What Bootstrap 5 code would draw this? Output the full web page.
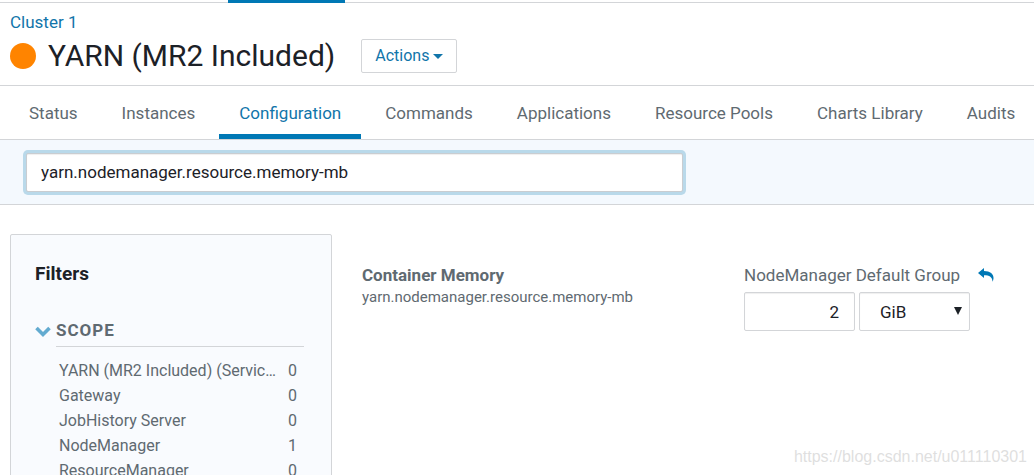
<!DOCTYPE html>
<html lang="en">
<head>
<meta charset="utf-8">
<meta name="viewport" content="width=device-width, initial-scale=1">
<title>YARN (MR2 Included) - Configuration</title>
<link href="https://cdn.jsdelivr.net/npm/bootstrap@5.3.0/dist/css/bootstrap.min.css" rel="stylesheet">
<style>
  :root { --brand: #0078b5; --line: #d3d5d8; --muted: #5f6a71; --ink: #1c2127; }
  body { font-family: Roboto, "Liberation Sans", sans-serif; font-size: 17px; line-height: 24px; color: var(--muted); background: #fff; }
  a { color: #1175aa; text-decoration: none; }
  .main-strip { height: 3px; border-bottom: 1px solid var(--line); padding-left: 228px; }
  .main-strip span { width: 117px; height: 3px; background: var(--brand); }
  .service-head { padding: 7px 10px 9px; border-bottom: 1px solid var(--line); }
  .service-head h1 { font-size: 30px; line-height: 40px; font-weight: 400; color: var(--ink); }
  .service-title { padding-top: 2px; }
  .health { width: 26px; height: 26px; }
  .btn-actions { --bs-btn-color: #1175aa; --bs-btn-border-color: var(--line); --bs-btn-border-radius: 2px; --bs-btn-font-size: 16px; --bs-btn-padding-x: 13px; --bs-btn-padding-y: 4px; --bs-btn-hover-color: #1175aa; --bs-btn-hover-border-color: var(--brand); margin-left: 26px; }
  .service-tabs { gap: 4px; padding: 0 9px; border-bottom: 1px solid var(--line); }
  .service-tabs .nav-link { padding: 15px 20px 9px; color: var(--muted); border-bottom: 5px solid transparent; }
  .service-tabs .nav-link.active { color: #1175aa; border-color: var(--brand); }
  .search-bar { background: #f4f9fe; border-bottom: 1px solid var(--line); padding: 13px 28px 12px 26px; }
  .search-bar input { width: 67%; height: 39px; padding: 0 14px 2px; font-size: 17px; color: var(--ink); border: 1px solid #c9cdd1; border-radius: 2px; box-shadow: 0 0 0 3px #b9d9ea, inset 0 1px 1px #0001; }
  .search-bar input:focus { color: var(--ink); border-color: #c9cdd1; box-shadow: 0 0 0 3px #b9d9ea; }
  .page-body { padding: 29px 10px 0; gap: 30px; }
  .filters { width: 322px; padding: 27px 27px 24px 24px; background: #f9fbfe; border: 1px solid var(--line); border-radius: 2px; }
  .filters h2 { font-size: 19px; line-height: 24px; font-weight: 700; color: var(--ink); margin-bottom: 32px; }
  .scope-toggle { color: var(--muted); font-weight: 700; letter-spacing: 1px; }
  .scope-title { border-bottom: 1px solid var(--line); padding-bottom: 4px; }
  .filter-list { font-size: 16px; line-height: 25px; padding: 11px 7px 0 24px; }
  .filter-list a { color: var(--muted); }
  .setting { padding-top: 29px; padding-right: 30px; }
  .setting-name { font-weight: 700; }
  .setting-key { font-size: 15px; line-height: 20px; }
  .setting-value { width: 250px; }
  .setting-label { margin-bottom: 5px; }
  .setting-value .field { width: 111px; height: 39px; font-size: 17px; color: var(--ink); border: 1px solid var(--line); border-radius: 2px; box-shadow: inset 0 1px 1px #0001; }
  .setting-value input { padding: 0 15px; }
  .unit select { appearance: none; background: #fff; padding: 0 20px; }
  .unit svg { right: 8px; top: 15px; pointer-events: none; }
  .watermark { right: 7px; bottom: 6px; color: #dfdfdf; font-family: "Liberation Sans", sans-serif; font-size: 16px; }
</style>
</head>
<body>
<div class="vh-100 overflow-hidden position-relative">
  <div class="main-strip"><span class="d-block"></span></div>

  <header class="service-head">
    <a href="#">Cluster 1</a>
    <div class="service-title d-flex align-items-center">
      <svg class="health" viewBox="0 0 26 26" role="img" aria-label="Concerning health"><circle cx="13" cy="13" r="13" fill="#ff8400"/></svg>
      <h1 class="mb-0 ms-2 ps-1">YARN (MR2 Included)</h1>
      <button type="button" class="btn btn-actions d-flex align-items-center gap-1">Actions
        <svg width="10" height="5" viewBox="0 0 10 5" aria-hidden="true"><path d="M0 0h10L5 5z" fill="currentColor"/></svg>
      </button>
    </div>
  </header>

  <nav class="nav service-tabs flex-nowrap text-nowrap" aria-label="Service">
    <a class="nav-link" href="#">Status</a>
    <a class="nav-link" href="#">Instances</a>
    <a class="nav-link active" aria-current="page" href="#">Configuration</a>
    <a class="nav-link" href="#">Commands</a>
    <a class="nav-link" href="#">Applications</a>
    <a class="nav-link" href="#">Resource Pools</a>
    <a class="nav-link" href="#">Charts Library</a>
    <a class="nav-link" href="#">Audits</a>
  </nav>

  <div class="search-bar">
    <input type="text" class="form-control" aria-label="Search configuration" value="yarn.nodemanager.resource.memory-mb">
  </div>

  <main class="page-body d-flex align-items-start">
    <aside class="filters flex-shrink-0">
      <h2>Filters</h2>
      <div class="d-flex">
        <svg class="flex-shrink-0 mt-2 me-1" width="17" height="12" viewBox="0 0 17 12" aria-hidden="true"><path d="M1.500 2 8 8.500 14.500 2" fill="none" stroke="#63abd0" stroke-width="3.600"/></svg>
        <div class="scope-title flex-grow-1"><a class="scope-toggle" href="#">SCOPE</a></div>
      </div>
      <ul class="filter-list list-unstyled mb-0">
        <li><a class="d-flex justify-content-between" href="#"><span>YARN (MR2 Included) (Servic…</span><span>0</span></a></li>
        <li><a class="d-flex justify-content-between" href="#"><span>Gateway</span><span>0</span></a></li>
        <li><a class="d-flex justify-content-between" href="#"><span>JobHistory Server</span><span>0</span></a></li>
        <li><a class="d-flex justify-content-between" href="#"><span>NodeManager</span><span>1</span></a></li>
        <li><a class="d-flex justify-content-between" href="#"><span>ResourceManager</span><span>0</span></a></li>
      </ul>
    </aside>

    <section class="setting d-flex flex-grow-1 justify-content-between">
      <div>
        <div class="setting-name">Container Memory</div>
        <div class="setting-key">yarn.nodemanager.resource.memory-mb</div>
      </div>
      <div class="setting-value">
        <div class="setting-label d-flex align-items-center justify-content-between">
          <label for="memory">NodeManager Default Group</label>
          <a class="d-flex" href="#" aria-label="Reset to default"><svg width="16" height="14" viewBox="0 0 16 14"><path d="M0 5 6 0v3c6 0 10 3 9.500 7.500-.1 1.300-.5 2.300-1 3.300C14.500 9 11.500 7.200 6 7.200V10z" fill="#0078b5"/></svg></a>
        </div>
        <div class="d-flex gap-1">
          <input id="memory" type="text" class="field text-end" value="2">
          <div class="unit position-relative">
            <select class="field" aria-label="Unit"><option>GiB</option><option>MiB</option></select>
            <svg class="position-absolute" width="8" height="8" viewBox="0 0 8 8" aria-hidden="true"><path d="M0 0h8L4 8z" fill="#1c2127"/></svg>
          </div>
        </div>
      </div>
    </section>
  </main>

  <div class="watermark position-absolute">https://blog.csdn.net/u011110301</div>
</div>
<script src="https://cdn.jsdelivr.net/npm/bootstrap@5.3.0/dist/js/bootstrap.bundle.min.js"></script>
</body>
</html>
